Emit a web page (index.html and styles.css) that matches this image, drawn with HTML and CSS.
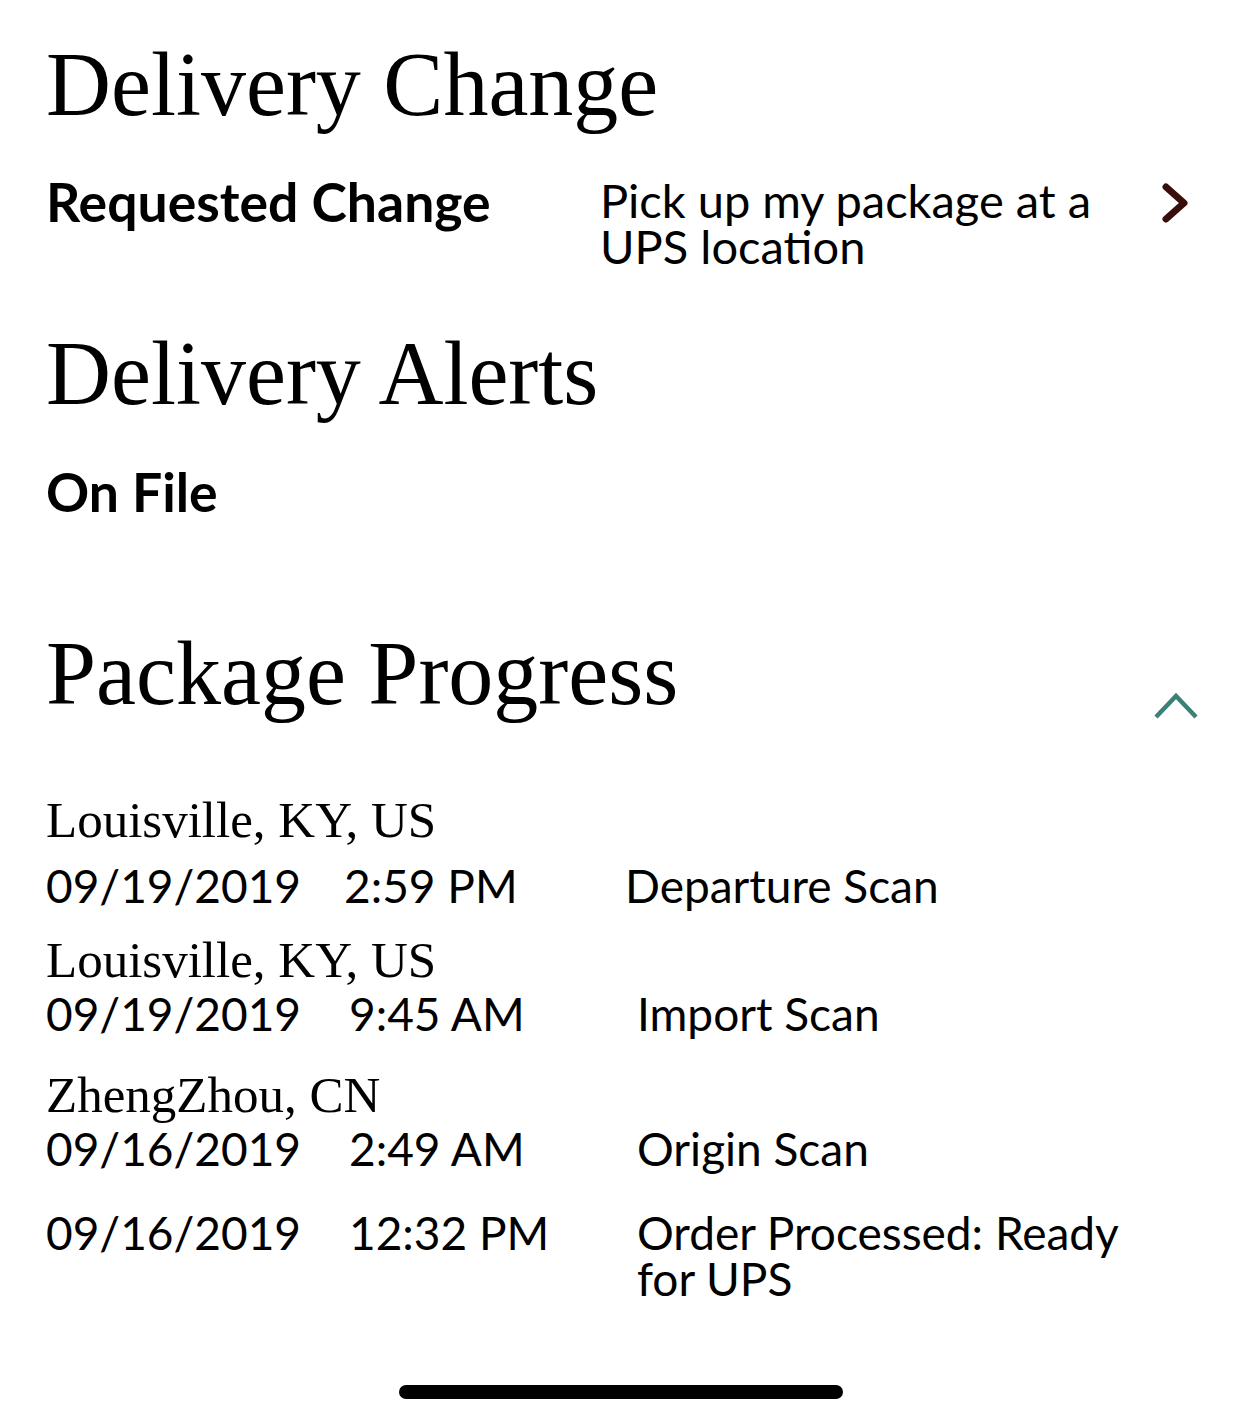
FILE: index.html
```html
<!DOCTYPE html>
<html lang="en">
<head>
<meta charset="utf-8">
<title>Delivery Change</title>
<link rel="stylesheet" href="styles.css">
</head>
<body>
<main class="page">
  <section class="section">
    <h1 class="heading">Delivery Change</h1>
    <div class="change-row">
      <div class="label">Requested Change</div>
      <div class="value">Pick up my package at a UPS location</div>
      <svg class="chev-right" viewBox="0 0 30 40" width="30" height="40" aria-hidden="true">
        <path d="M6 4 L24 20 L6 36" fill="none" stroke="#3a0d0d" stroke-width="7" stroke-linecap="round" stroke-linejoin="round"/>
      </svg>
    </div>
  </section>

  <section class="section alerts">
    <h1 class="heading">Delivery Alerts</h1>
    <div class="label">On File</div>
  </section>

  <section class="section progress">
    <div class="progress-head">
      <h1 class="heading">Package Progress</h1>
      <svg class="chev-up" viewBox="0 0 48 30" width="48" height="30" aria-hidden="true">
        <path d="M4 25 L24 4 L44 25" fill="none" stroke="#3b8178" stroke-width="4.5"/>
      </svg>
    </div>

    <div class="events">
      <div class="location">Louisville, KY, US</div>
      <div class="event first">
        <span class="date">09/19/2019</span>
        <span class="time">2:59 PM</span>
        <span class="desc">Departure Scan</span>
      </div>
      <div class="location second">Louisville, KY, US</div>
      <div class="event">
        <span class="date">09/19/2019</span>
        <span class="time">9:45 AM</span>
        <span class="desc">Import Scan</span>
      </div>
      <div class="location third">ZhengZhou, CN</div>
      <div class="event">
        <span class="date">09/16/2019</span>
        <span class="time">2:49 AM</span>
        <span class="desc">Origin Scan</span>
      </div>
      <div class="event last">
        <span class="date">09/16/2019</span>
        <span class="time">12:32 PM</span>
        <span class="desc">Order Processed: Ready for UPS</span>
      </div>
    </div>
  </section>

  <div class="home-bar"></div>
</main>
</body>
</html>
```

FILE: styles.css
```css
* { box-sizing: border-box; }
html, body { margin: 0; padding: 0; background: #fff; }
body {
  color: #000;
  font-family: "Lato", "Liberation Sans", sans-serif;
}
.page {
  width: 1242px;
  height: 1424px;
  padding: 35px 46px 0 46px;
  display: flex;
  flex-direction: column;
}
.heading {
  margin: 0;
  font-family: "Liberation Serif", serif;
  font-weight: 400;
  font-size: 90px;
  line-height: 100px;
}
.label {
  font-weight: 700;
  font-size: 53.5px;
  line-height: 60px;
}
.change-row {
  display: flex;
  align-items: flex-start;
  margin-top: 36px;
}
.change-row .label { width: 554px; flex: none; }
.value {
  flex: 1;
  font-size: 47px;
  line-height: 46px;
  padding-top: 5.5px;
  max-width: 510px;
}
.chev-right { margin-left: auto; margin-top: 12px; margin-right: 6px; }
.alerts { margin-top: 55.5px; }
.alerts .label { margin-top: 36.5px; }
.progress { margin-top: 103px; }
.progress-head {
  display: flex;
  justify-content: space-between;
  align-items: flex-start;
}
.chev-up { margin-top: 68.5px; margin-right: -4px; }
.events { margin-top: 68.5px; }
.location {
  font-family: "Liberation Serif", serif;
  font-size: 51px;
  line-height: 56px;
}
.location.second { margin-top: 23px; }
.location.third { margin-top: 30px; }
.event {
  display: grid;
  grid-template-columns: 303px 288px 1fr;
  font-size: 46px;
  line-height: 46px;
  margin-top: 3px;
}
.event .desc { max-width: 500px; }
.event.first { grid-template-columns: 298px 281px 1fr; margin-top: 15px; }
.event.last { margin-top: 38px; }
.home-bar {
  width: 444px;
  height: 14px;
  border-radius: 7px;
  background: #000;
  margin: auto 0 25px 353px;
}
```
